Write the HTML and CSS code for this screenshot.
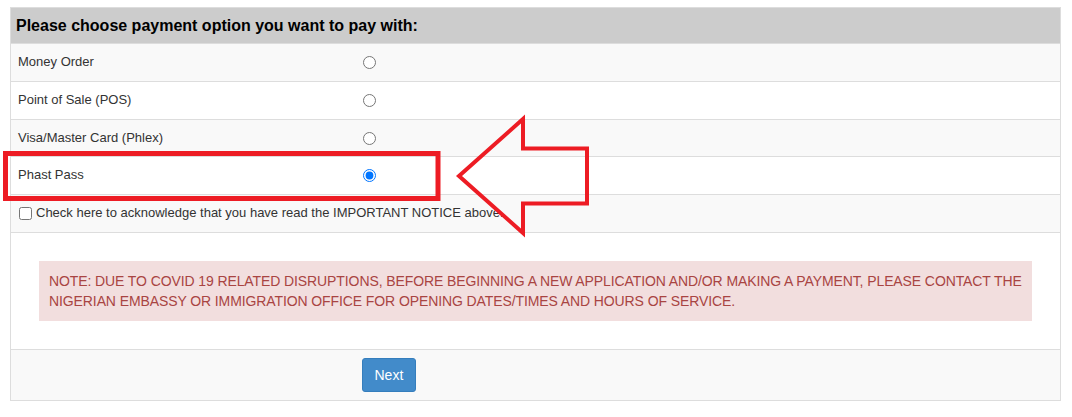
FILE: index.html
```html
<!DOCTYPE html>
<html lang="en">
<head>
  <meta charset="UTF-8" />
  <title>Payment Option</title>
  <link rel="stylesheet" href="styles.css">
</head>
<body>

  <div class="page">
    <table class="pay-table">
      <tr>
        <th colspan="2">Please choose payment option you want to pay with:</th>
      </tr>
      <tr class="stripe">
        <td class="opt-name">Money Order</td>
        <td class="opt-radio"><input type="radio" name="payopt" value="mo" /></td>
      </tr>
      <tr>
        <td class="opt-name">Point of Sale (POS)</td>
        <td class="opt-radio"><input type="radio" name="payopt" value="pos" /></td>
      </tr>
      <tr class="stripe">
        <td class="opt-name">Visa/Master Card (Phlex)</td>
        <td class="opt-radio"><input type="radio" name="payopt" value="visa" /></td>
      </tr>
      <tr>
        <td class="opt-name">Phast Pass</td>
        <td class="opt-radio"><input type="radio" name="payopt" value="phast" checked /></td>
      </tr>
      <tr class="stripe">
        <td colspan="2" class="ack">
          <label><input type="checkbox" name="ack" /> Check here to acknowledge that you have read the IMPORTANT NOTICE above.</label>
        </td>
      </tr>
      <tr>
        <td colspan="2" class="notice-cell">
          <div class="notice">NOTE: DUE TO COVID 19 RELATED DISRUPTIONS, BEFORE BEGINNING A NEW APPLICATION AND/OR MAKING A PAYMENT, PLEASE CONTACT THE NIGERIAN EMBASSY OR IMMIGRATION OFFICE FOR OPENING DATES/TIMES AND HOURS OF SERVICE.</div>
        </td>
      </tr>
      <tr class="stripe footer-row">
        <td></td>
        <td class="opt-radio"><button type="button" class="next-btn">Next</button></td>
      </tr>
    </table>
  </div>

  <!-- red markup drawn on top of the screenshot -->
  <svg class="markup" width="1072" height="417" viewBox="0 0 1072 417">
    <rect x="5.5" y="153.5" width="432.5" height="45" fill="none" stroke="#ed1c24" stroke-width="5" />
    <polygon points="459,176 523,119 523,148.5 587,148.5 587,203.5 523,203.5 523,233" fill="none" stroke="#ed1c24" stroke-width="4" stroke-linejoin="miter" />
  </svg>

</body>
</html>
```

FILE: styles.css
```css
* {
  box-sizing: border-box;
}

body {
  margin: 0;
  padding: 0;
  font-family: "Liberation Sans", Arial, sans-serif;
  color: #333;
  background: #fff;
}

.page {
  padding: 7px 11px 0 10px;
}

.pay-table {
  width: 100%;
  border-collapse: collapse;
  border: 1px solid #ddd;
  font-size: 13px;
}

.pay-table th {
  background: #ccc;
  color: #000;
  font-size: 16px;
  font-weight: bold;
  text-align: left;
  height: 36px;
  padding: 0 5px;
}

.pay-table td {
  border-top: 1px solid #ddd;
  padding: 8px 7px;
  line-height: 20.75px;
  vertical-align: middle;
}

.pay-table tr.stripe td {
  background: #f9f9f9;
}

.opt-name {
  width: 344px;
}

.opt-radio {
  padding-left: 8px !important;
}

.opt-radio input[type="radio"] {
  margin: 0;
  width: 13px;
  height: 13px;
  vertical-align: middle;
}

.ack label {
  display: flex;
  align-items: center;
  gap: 4px;
}

.ack input[type="checkbox"] {
  margin: 0 0 0 1px;
  width: 13px;
  height: 13px;
}

.notice-cell {
  padding: 28px 28px 28px !important;
  background: #fff;
}

.notice {
  background: #f2dede;
  color: #a94442;
  padding: 10px;
  line-height: 20px;
  font-size: 14px;
  letter-spacing: -0.1px;
}

.footer-row td {
  padding: 8px 7px 8px !important;
  height: 51px;
}

.next-btn {
  font-family: "Liberation Sans", Arial, sans-serif;
  font-size: 14px;
  line-height: 20px;
  padding: 6px 12px;
  color: #fff;
  background: #428bca;
  border: 1px solid #357ebd;
  border-radius: 3px;
  cursor: pointer;
}

.markup {
  position: absolute;
  top: 0;
  left: 0;
  pointer-events: none;
}
```
